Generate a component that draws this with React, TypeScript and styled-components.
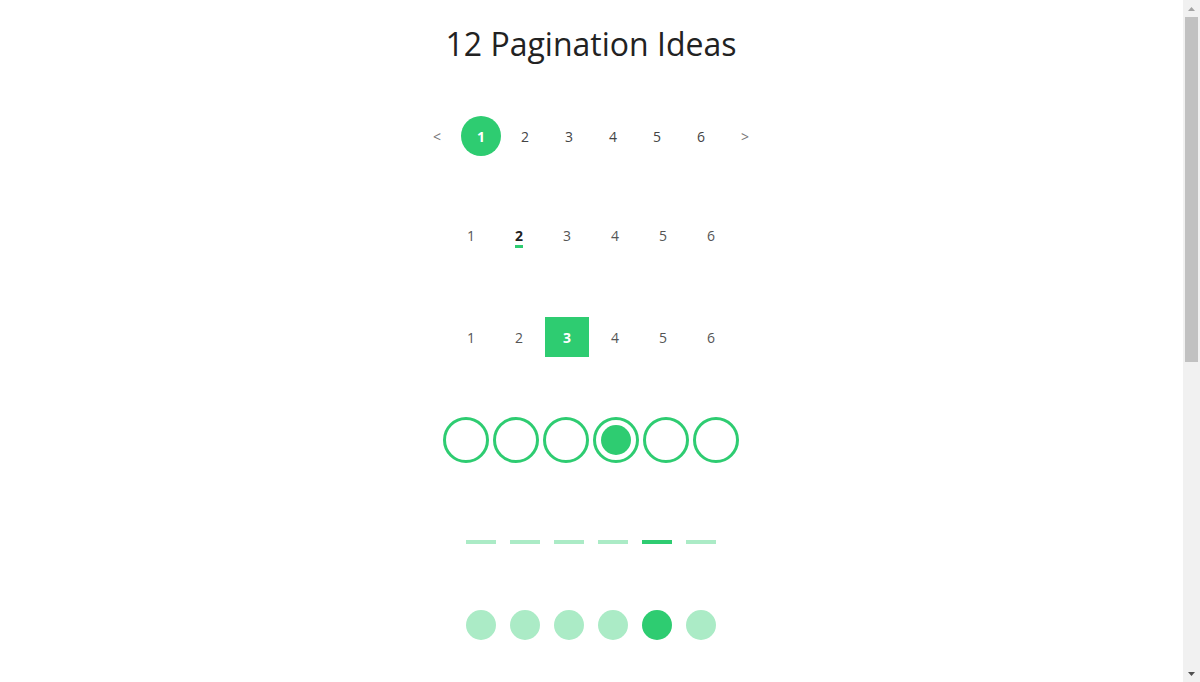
import React, { useLayoutEffect, useRef, useState } from "react";
import styled, { createGlobalStyle, css } from "styled-components";

const GREEN = "#2ecc71";
const GREEN_LIGHT = "#abebc6";

const Global = createGlobalStyle`
  html, body { margin: 0; padding: 0; background: #fff; height: 100%; overflow: hidden; }
  body { font-family: "Open Sans", "Noto Sans", sans-serif; color: #333; }
  #root { height: 100%; }
  * { box-sizing: border-box; }
`;

const Shell = styled.div`
  display: flex;
  height: 100vh;
`;

const Scroller = styled.div`
  flex: 1;
  overflow-y: auto;
  scrollbar-width: none;
  &::-webkit-scrollbar { display: none; }
`;

/* custom scroll rail on the right edge */
const Rail = styled.div`
  width: 17px;
  flex: none;
  display: flex;
  flex-direction: column;
  background: #f1f1f1;
`;

const RailArrow = styled.button<{ $dim?: boolean }>`
  all: unset;
  height: 17px;
  display: flex;
  align-items: center;
  justify-content: center;
  color: ${(p) => (p.$dim ? "#a3a3a3" : "#505050")};
  cursor: pointer;
`;

const RailTrack = styled.div`
  flex: 1;
  padding: 0 2px;
`;

const Thumb = styled.div`
  background: #c1c1c1;
`;

const Page = styled.main`
  display: flex;
  flex-direction: column;
  align-items: center;
  min-height: 1281px;
  padding-right: 1px;
`;

const Title = styled.h1`
  margin: 0;
  padding-top: 22px;
  font-size: 32px;
  line-height: 44px;
  font-weight: 400;
  color: #222;
`;

const Section = styled.nav<{ $mt: number; $gap: number }>`
  display: flex;
  align-items: center;
  margin-top: ${(p) => p.$mt}px;
  gap: ${(p) => p.$gap}px;
`;

const ButtonBase = css`
  all: unset;
  box-sizing: border-box;
  cursor: pointer;
  font-family: "Open Sans", "Noto Sans", sans-serif;
`;

/* round active bubble with arrows */
const RoundItem = styled.button<{ $active?: boolean; $arrow?: boolean }>`
  ${ButtonBase};
  width: 40px;
  height: 40px;
  border-radius: 50%;
  display: flex;
  align-items: center;
  justify-content: center;
  font-size: 14px;
  color: ${(p) => (p.$arrow ? "#777" : "#444")};
  ${(p) =>
    p.$active &&
    css`
      background: ${GREEN};
      color: #fff;
      font-weight: 700;
    `}
`;

/* small underline marker */
const UnderItem = styled.button<{ $active?: boolean }>`
  ${ButtonBase};
  position: relative;
  width: 44px;
  height: 40px;
  display: flex;
  align-items: center;
  justify-content: center;
  font-size: 14px;
  color: #555;
  ${(p) =>
    p.$active &&
    css`
      color: #222;
      font-weight: 700;
      &::after {
        content: "";
        position: absolute;
        left: 18px;
        top: 30px;
        width: 8px;
        height: 3px;
        background: ${GREEN};
      }
    `}
`;

/* square block */
const BlockItem = styled.button<{ $active?: boolean }>`
  ${ButtonBase};
  width: 44px;
  height: 40px;
  display: flex;
  align-items: center;
  justify-content: center;
  font-size: 14px;
  color: #555;
  ${(p) =>
    p.$active &&
    css`
      background: ${GREEN};
      color: #fff;
      font-weight: 700;
    `}
`;

/* outlined rings */
const Ring = styled.button<{ $active?: boolean }>`
  ${ButtonBase};
  width: 46px;
  height: 46px;
  border-radius: 50%;
  border: 3px solid ${GREEN};
  display: flex;
  align-items: center;
  justify-content: center;
  &::before {
    content: "";
    width: 30px;
    height: 30px;
    border-radius: 50%;
    background: ${(p) => (p.$active ? GREEN : "transparent")};
  }
`;

/* dashes */
const Dash = styled.button<{ $active?: boolean }>`
  ${ButtonBase};
  width: 30px;
  height: 4px;
  background: ${(p) => (p.$active ? GREEN : GREEN_LIGHT)};
`;

/* dots */
const Dot = styled.button<{ $active?: boolean }>`
  ${ButtonBase};
  width: 30px;
  height: 30px;
  border-radius: 50%;
  background: ${(p) => (p.$active ? GREEN : GREEN_LIGHT)};
`;

const pages = [1, 2, 3, 4, 5, 6];

const ArrowUp = () => (
  <svg width="7" height="4" viewBox="0 0 7 4">
    <polygon points="3.5,0 7,4 0,4" fill="currentColor" />
  </svg>
);

const ArrowDown = () => (
  <svg width="7" height="4" viewBox="0 0 7 4">
    <polygon points="0,0 7,0 3.5,4" fill="currentColor" />
  </svg>
);

export default function App() {
  const [p1, setP1] = useState(1);
  const [p2, setP2] = useState(2);
  const [p3, setP3] = useState(3);
  const [p4, setP4] = useState(4);
  const [p5, setP5] = useState(5);
  const [p6, setP6] = useState(5);

  const scrollRef = useRef<HTMLDivElement>(null);
  const trackRef = useRef<HTMLDivElement>(null);
  const [thumb, setThumb] = useState({ top: 0, height: 345, atTop: true });

  const measure = () => {
    const s = scrollRef.current;
    const t = trackRef.current;
    if (!s || !t) return;
    const trackH = t.clientHeight;
    const h = Math.max(20, Math.round((trackH * s.clientHeight) / s.scrollHeight));
    const range = s.scrollHeight - s.clientHeight;
    const top = range > 0 ? Math.round((s.scrollTop / range) * (trackH - h)) : 0;
    setThumb({ top, height: h, atTop: s.scrollTop <= 0 });
  };

  useLayoutEffect(() => {
    measure();
    window.addEventListener("resize", measure);
    return () => window.removeEventListener("resize", measure);
  }, []);

  const step = (d: number) => scrollRef.current?.scrollBy({ top: d });

  return (
    <>
      <Global />
      <Shell>
        <Scroller ref={scrollRef} onScroll={measure}>
          <Page>
            <Title>12 Pagination Ideas</Title>

            <Section $mt={50} $gap={4}>
              <RoundItem $arrow onClick={() => setP1(Math.max(1, p1 - 1))}>&lt;</RoundItem>
              {pages.map((n) => (
                <RoundItem key={n} $active={n === p1} onClick={() => setP1(n)}>
                  {n}
                </RoundItem>
              ))}
              <RoundItem $arrow onClick={() => setP1(Math.min(6, p1 + 1))}>&gt;</RoundItem>
            </Section>

            <Section $mt={59} $gap={4}>
              {pages.map((n) => (
                <UnderItem key={n} $active={n === p2} onClick={() => setP2(n)}>
                  {n}
                </UnderItem>
              ))}
            </Section>

            <Section $mt={62} $gap={4}>
              {pages.map((n) => (
                <BlockItem key={n} $active={n === p3} onClick={() => setP3(n)}>
                  {n}
                </BlockItem>
              ))}
            </Section>

            <Section $mt={60} $gap={4}>
              {pages.map((n) => (
                <Ring key={n} $active={n === p4} onClick={() => setP4(n)} aria-label={`Page ${n}`} />
              ))}
            </Section>

            <Section $mt={77} $gap={14}>
              {pages.map((n) => (
                <Dash key={n} $active={n === p5} onClick={() => setP5(n)} aria-label={`Page ${n}`} />
              ))}
            </Section>

            <Section $mt={66} $gap={14}>
              {pages.map((n) => (
                <Dot key={n} $active={n === p6} onClick={() => setP6(n)} aria-label={`Page ${n}`} />
              ))}
            </Section>
          </Page>
        </Scroller>

        <Rail>
          <RailArrow $dim={thumb.atTop} onClick={() => step(-40)} aria-label="Scroll up">
            <ArrowUp />
          </RailArrow>
          <RailTrack ref={trackRef}>
            <Thumb style={{ marginTop: thumb.top, height: thumb.height }} />
          </RailTrack>
          <RailArrow onClick={() => step(40)} aria-label="Scroll down">
            <ArrowDown />
          </RailArrow>
        </Rail>
      </Shell>
    </>
  );
}
